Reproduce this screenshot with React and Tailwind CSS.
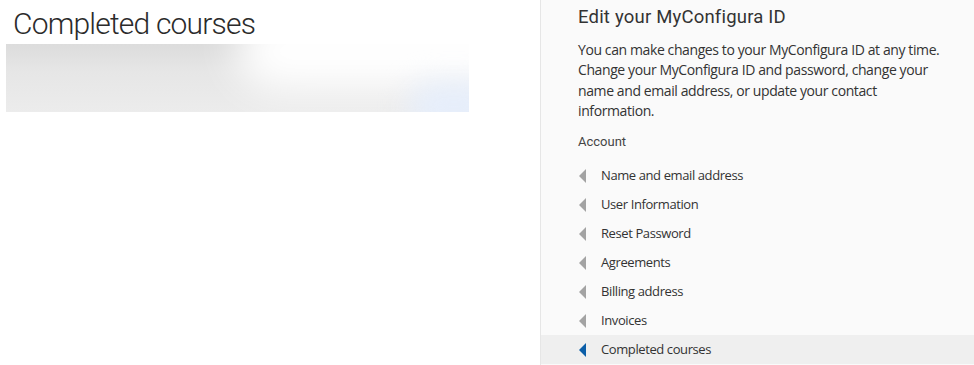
import React from 'react'

const items = [
  'Name and email address',
  'User Information',
  'Reset Password',
  'Agreements',
  'Billing address',
  'Invoices',
  'Completed courses',
]

function Caret({ active }) {
  return (
    <svg width="8" height="14" viewBox="0 0 8 14" className="shrink-0">
      <path d="M7 0 L0 7 L7 14 Z" fill={active ? '#0b5ea8' : '#a3a3a3'} />
    </svg>
  )
}

export default function App() {
  return (
    <div className="flex w-[974px] h-[365px] bg-white overflow-hidden font-['Open_Sans',sans-serif] text-[#333]">
      <div className="w-[540px] shrink-0 pt-[5px]">
        <h1 className="pl-[13px] text-[30px] leading-[37px] font-light tracking-[-0.8px] text-[#2b2b2b] font-['Roboto',sans-serif]">
          Completed courses
        </h1>
        <div className="relative ml-[6px] mt-[2px] w-[463px] h-[68px] overflow-hidden bg-[#ebebeb]">
          <div className="absolute inset-0 bg-[linear-gradient(180deg,#dcdcdc_0%,#e6e6e6_40%,#ececec_100%)]" />
          <div className="absolute left-[230px] top-[-34px] w-[320px] h-[80px] rounded-full bg-white blur-[20px]" />
          <div className="absolute right-[-30px] bottom-[-20px] w-[90px] h-[50px] rounded-full bg-[#e6eefb] blur-[14px]" />
        </div>
      </div>
      <aside className="w-[434px] shrink-0 h-full bg-[#fafafa] border-l border-[#e6e6e6]">
        <h2 className="pl-[37px] pt-[5px] text-[18.5px] leading-[24px] tracking-[0.2px] font-['Roboto',sans-serif] text-[#333]">
          Edit your MyConfigura ID
        </h2>
        <p className="pl-[37px] pr-[20px] mt-[11px] text-[14px] leading-[20.3px] tracking-[-0.4px] text-[#333]">
          You can make changes to your MyConfigura ID at any time. Change your MyConfigura ID and password, change your name and email address, or update your contact information.
        </p>
        <div className="pl-[37px] mt-[12px] text-[13px] leading-[18px] font-['Roboto',sans-serif] text-[#444]">
          Account
        </div>
        <ul className="mt-[10px]">
          {items.map((item, i) => {
            const active = i === items.length - 1
            return (
              <li
                key={item}
                className={`flex items-center h-[29px] pl-[38px] gap-[14px] text-[13px] tracking-[-0.4px] text-[#333] ${active ? 'bg-[#efefef]' : ''}`}
              >
                <Caret active={active} />
                <span>{item}</span>
              </li>
            )
          })}
        </ul>
      </aside>
    </div>
  )
}
